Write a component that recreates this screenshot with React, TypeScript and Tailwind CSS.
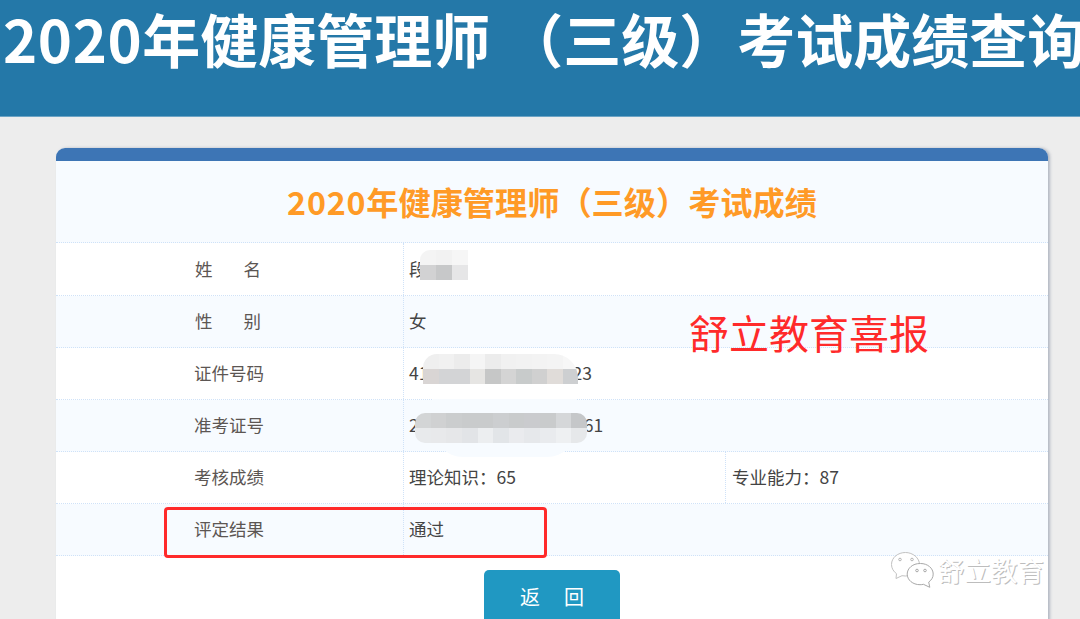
const font = "font-['Noto_Sans_CJK_SC','Noto_Sans',sans-serif]";

type Row = { label: React.ReactNode; value: React.ReactNode; extra?: React.ReactNode; tint?: boolean; first?: boolean };

function Spaced({ a, b }: { a: string; b: string }) {
  return (
    <span className="flex gap-[31px] pl-[1px]">
      <span>{a}</span>
      <span>{b}</span>
    </span>
  );
}

function Hidden({ a, b, gap }: { a: string; b: string; gap: string }) {
  return (
    <span className={`flex ${gap}`}>
      <span>{a}</span>
      <span>{b}</span>
    </span>
  );
}

const rows: Row[] = [
  { label: <Spaced a="姓" b="名" />, value: "段", first: true },
  { label: <Spaced a="性" b="别" />, value: "女", tint: true },
  { label: "证件号码", value: <Hidden a="41" b="23" gap="gap-[144px]" /> },
  { label: "准考证号", value: <Hidden a="2" b="61" gap="gap-[165px]" />, tint: true },
  { label: "考核成绩", value: "理论知识：65", extra: "专业能力：87" },
  { label: "评定结果", value: "通过", tint: true },
];

function Mosaic({ className, top, bottom }: { className: string; top: string[]; bottom: string[] }) {
  return (
    <div className={`absolute overflow-hidden ${className}`}>
      {[top, bottom].map((line, i) => (
        <div key={i} className="flex h-[15px]">
          {line.map((c, j) => (
            <div key={j} className="h-[15px] flex-1" style={{ backgroundColor: c }} />
          ))}
        </div>
      ))}
    </div>
  );
}

export default function App() {
  return (
    <div className={`relative h-[619px] w-[1080px] overflow-hidden bg-[#ededed] ${font}`}>
      <header className="h-[117px] whitespace-nowrap border-b border-[#6ba3c4] bg-[#2478a8] pl-[3px] text-[58px] font-bold leading-[76px] text-white">
        <span className="tracking-[0.6px]">2020</span>
        <span>年健康管理师</span>
        <span className="ml-[15px]">（三级）</span>
        <span>考试成绩查询</span>
      </header>

      <main className="px-[56px] pt-[31px]">
        <section className="h-[520px] w-[992px] overflow-hidden rounded-t-[9px] bg-white shadow-[2px_0_3px_rgba(130,140,160,0.55)]">
          <div className="h-[13px] bg-[#3d75b5]" />
          <h1 className="flex h-[82px] items-center justify-center border-b border-dotted border-[#cfe2f8] bg-[#f7fbff] text-[32.2px] font-bold text-[#ff9a26]">
            <span className="tracking-[0.8px]">2020</span>年健康管理师（三级）考试成绩
          </h1>
          {rows.map((r, i) => (
            <div
              key={i}
              className={`flex items-center border-b border-dotted border-[#cfe2f8] text-[17.5px] ${r.first ? "h-[53px]" : "h-[52px]"} ${r.tint ? "bg-[#f7fbff]" : "bg-white"}`}
            >
              <div className="w-[347px] pl-[138px] text-[#5c5653]">{r.label}</div>
              <div className={`flex h-full items-center border-l border-dotted border-[#cfe2f8] pl-[5px] text-[#444] ${r.extra ? "w-[322px]" : "flex-1"}`}>
                {r.value}
              </div>
              {r.extra && (
                <div className="flex h-full flex-1 items-center border-l border-dotted border-[#cfe2f8] pl-[6px] text-[#444]">
                  {r.extra}
                </div>
              )}
            </div>
          ))}
          <div className="flex justify-center pt-[14px]">
            <button className="h-[60px] w-[136px] rounded-[5px] bg-[#2098c2] pb-[6px] text-[20px] text-white">
              <span className="flex justify-center gap-[24px]">
                <span>返</span>
                <span>回</span>
              </span>
            </button>
          </div>
        </section>
      </main>

      {/* pasted-on masks over the private numbers */}
      <div className="absolute left-[433px] top-[399px] h-[58px] w-[144px] rounded-b-[30px] bg-[#f7fbff]" />
      <div className="absolute left-[424px] top-[353px] h-[38px] w-[152px] rounded-t-[20px] bg-white" />
      <Mosaic
        className="left-[420px] top-[250px] w-[48px] rounded-tl-[10px]"
        top={["#f4f4f4", "#f2f2f2", "#f6f6f6"]}
        bottom={["#d2d2d3", "#c7c8c9", "#e6e6e7"]}
      />
      <Mosaic
        className="left-[423px] top-[354px] w-[155px] rounded-tl-[14px] rounded-tr-[24px]"
        top={["#efefef", "#f1f1f1", "#ececec", "#f5f5f5", "#ececec", "#f1f1f1", "#f2f2f2", "#f3f3f3", "#f4f4f4", "#f7f7f7"]}
        bottom={["#d9d5d4", "#d3d4d6", "#d3d4d6", "#e6e5e3", "#c6c7c7", "#d4d4d4", "#c8cbcb", "#d0d0d0", "#e0dcd9", "#cdcfd1"]}
      />
      <Mosaic
        className="left-[415px] top-[413px] w-[172px] rounded-[10px]"
        top={["#d3d5d6", "#d0d1d2", "#cbcdce", "#c9cbcc", "#c9cbcc", "#ccced0", "#c9cbcc", "#cacbce", "#c9cbcc", "#d5d7d9", "#c5c7c9"]}
        bottom={["#e8eaec", "#e8e9eb", "#e6e7e9", "#e2e4e7", "#eceef0", "#e2e5e8", "#eaebee", "#e6e8eb", "#e9ebee", "#eef0f2", "#e6e8ea"]}
      />

      {/* annotations on top of the screenshot */}
      <div className="absolute left-[689px] top-[303px] whitespace-nowrap text-[40px] leading-[58px] text-[#ff2a2a]">
        舒立教育喜报
      </div>
      <div className="absolute left-[164px] top-[507px] h-[51px] w-[383px] rounded-[4px] border-[3.5px] border-[#ff2a2a]" />

      <div className="absolute left-[890px] top-[551px] flex items-center">
        <svg width="48" height="38" viewBox="0 0 48 38" fill="#ffffff" stroke="#c2c2c2" strokeWidth="1">
          <path d="M15.500 1.500C8 1.500 1.500 6.500 1.500 13.500c0 3.800 2 7 5 9.200L6 27.500l6-2.800c1.200.2 2.300.3 3.500.3 8 0 14-5.200 14-11.500S23 1.500 15.500 1.500z" />
          <path d="M30 12.500c-7.200 0-12.800 4.700-12.800 10.600S22.800 33.700 30 33.700c1.200 0 2.300-.1 3.400-.4l6.400 3-1.100-5.200c2.800-2 4.500-4.800 4.500-8 0-5.900-5.600-10.600-12.700-10.600z" stroke="#a8a8a8" />
          <circle cx="10" cy="8.500" r="1.300" fill="none" stroke="#b5b5b5" />
          <circle cx="22" cy="8.500" r="1.300" fill="none" stroke="#b5b5b5" />
          <circle cx="27" cy="19.500" r="1.300" fill="none" stroke="#a8a8a8" />
          <circle cx="35" cy="19.500" r="1.300" fill="none" stroke="#a8a8a8" />
        </svg>
        <span className="whitespace-nowrap text-[26.500px] font-normal leading-[36px] text-white [text-shadow:1px_1px_0_#bdbdbd]">
          舒立教育
        </span>
      </div>
    </div>
  );
}
